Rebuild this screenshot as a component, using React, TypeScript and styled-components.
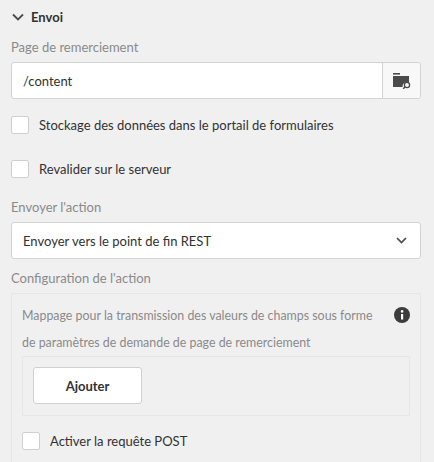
import React from "react";
import styled, { createGlobalStyle } from "styled-components";

const Global = createGlobalStyle`
  html, body { margin: 0; background: #f0f0f0; }
  body { font-family: Lato, "Open Sans", sans-serif; font-size: 13px; color: #323232; }
`;

const Page = styled.div`
  padding: 8px 13px 0 11px;
  display: flex; flex-direction: column;
`;
const Header = styled.div`
  display: flex; align-items: center; gap: 7px; height: 18px; padding-left: 1px;
  font-weight: 700; font-size: 13px; color: #323232; margin-bottom: 13px;
`;
const Label = styled.div`
  color: #8a8a8a; font-size: 13px; height: 16px; line-height: 16px; margin-bottom: 7px;
`;
const InputRow = styled.div`
  display: flex; height: 37px; border: 1px solid #d3d3d3; border-radius: 3px; background: #fff;
  box-sizing: border-box;
`;
const InputText = styled.div`
  flex: 1; display: flex; align-items: center; padding-left: 11px; font-size: 13px;
`;
const IconBtn = styled.div`
  width: 37px; border-left: 1px solid #d3d3d3; background: #f8f8f8; display: flex;
  align-items: center; justify-content: center; border-radius: 0 3px 3px 0;
`;
const CheckRow = styled.div<{ $mt: number }>`
  display: flex; align-items: center; gap: 10px; margin-top: ${p => p.$mt}px; height: 18px;
`;
const Box = styled.div`
  width: 16px; height: 16px; border: 1px solid #d0d0d0; background: #fff; border-radius: 2px;
`;
const Select = styled.div`
  display: flex; align-items: center; justify-content: space-between; height: 37px;
  box-sizing: border-box; border: 1px solid #d3d3d3; border-radius: 3px; background: #fff;
  padding: 0 13px 0 11px; margin-bottom: 11px;
`;
const Config = styled.div`
  border: 1px solid #e6e6e6; border-bottom: none; background: #f0f0f0;
  padding: 8px 10px 30px 10px; height: 200px; box-sizing: border-box;
`;
const Desc = styled.div`
  display: flex; justify-content: space-between; color: #8a8a8a; line-height: 27px;
  font-size: 12.4px;
`;
const Inner = styled.div`
  border: 1px solid #e6e6e6; padding: 10px; height: 38px;
`;
const Button = styled.div`
  width: 109px; height: 37px; box-sizing: border-box; border: 1px solid #d0d0d0; border-radius: 3px;
  background: #fff; display: flex; align-items: center; justify-content: center;
  font-weight: 700; font-size: 13px;
`;
const Spacer = styled.div`height: 21px;`;

export default function App() {
  return (
    <>
      <Global />
      <Page>
        <Header>
          <svg width="12" height="8" viewBox="0 0 12 8"><path d="M1 1.5l5 5 5-5" stroke="#4b4b4b" strokeWidth="1.8" fill="none" /></svg>
          Envoi
        </Header>
        <Label>Page de remerciement</Label>
        <InputRow>
          <InputText>/content</InputText>
          <IconBtn>
            <svg width="18" height="16" viewBox="0 0 18 16">
              <rect x="0" y="0" width="7" height="1.6" fill="#4b4b4b" />
              <path d="M0 3h16v6.5a4.5 4.5 0 0 0-6.5 4.5H0z" fill="#4b4b4b" />
              <circle cx="14" cy="12" r="2.6" stroke="#4b4b4b" strokeWidth="1.3" fill="none" />
              <path d="M12.2 13.8l-2 2" stroke="#4b4b4b" strokeWidth="1.5" />
            </svg>
          </IconBtn>
        </InputRow>
        <CheckRow $mt={17}><Box />Stockage des données dans le portail de formulaires</CheckRow>
        <CheckRow $mt={26}><Box />Revalider sur le serveur</CheckRow>
        <Spacer />
        <Label>Envoyer l'action</Label>
        <Select>
          Envoyer vers le point de fin REST
          <svg width="11" height="7" viewBox="0 0 11 7"><path d="M1 1l4.5 4.5L10 1" stroke="#4b4b4b" strokeWidth="1.7" fill="none" /></svg>
        </Select>
        <Label>Configuration de l'action</Label>
        <Config>
          <Desc>
            <div>Mappage pour la transmission des valeurs de champs sous forme de paramètres de demande de page de remerciement</div>
            <svg width="16" height="16" viewBox="0 0 16 16" style={{ flexShrink: 0, marginTop: 5, marginLeft: 6 }}>
              <circle cx="8" cy="8" r="8" fill="#3c3c3c" />
              <rect x="7" y="7" width="2.2" height="5.5" fill="#fff" />
              <circle cx="8.1" cy="4.4" r="1.3" fill="#fff" />
            </svg>
          </Desc>
          <Inner><Button>Ajouter</Button></Inner>
          <CheckRow $mt={16}><Box />Activer la requête POST</CheckRow>
        </Config>
      </Page>
    </>
  );
}
